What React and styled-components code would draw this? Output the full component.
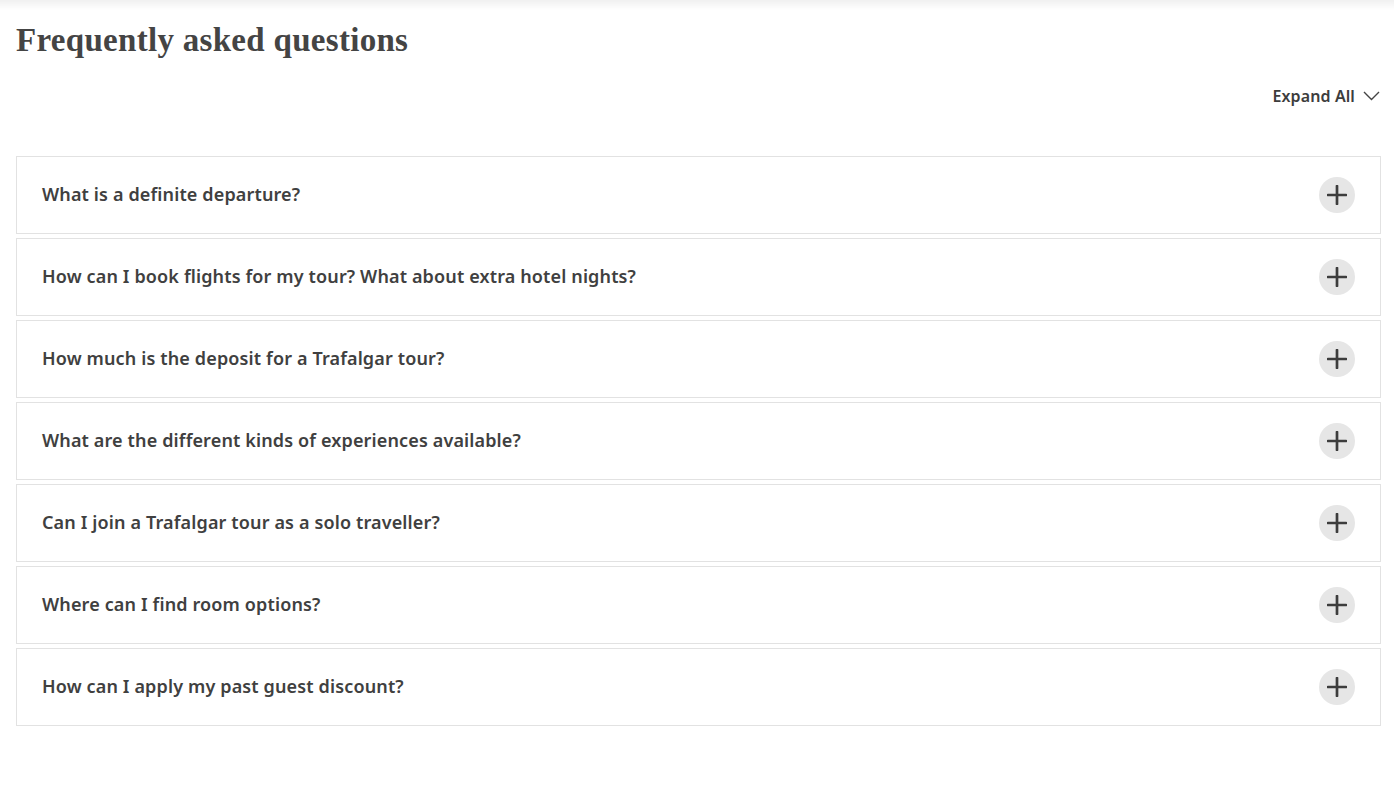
import React, { useState } from 'react';
import styled, { createGlobalStyle } from 'styled-components';

const questions = [
  'What is a definite departure?',
  'How can I book flights for my tour? What about extra hotel nights?',
  'How much is the deposit for a Trafalgar tour?',
  'What are the different kinds of experiences available?',
  'Can I join a Trafalgar tour as a solo traveller?',
  'Where can I find room options?',
  'How can I apply my past guest discount?',
];

function PlusIcon() {
  return (
    <svg width="20" height="20" viewBox="0 0 20 20">
      <path d="M10 1v18M1 10h18" stroke="#3d3d3d" strokeWidth="2.7" strokeLinecap="round" />
    </svg>
  );
}

function ChevronDown() {
  return (
    <svg width="17" height="10" viewBox="0 0 17 10" fill="none">
      <path d="M1 1l7.5 7.5L16 1" stroke="#444" strokeWidth="1.4" />
    </svg>
  );
}

export default function App() {
  const [open, setOpen] = useState({});

  const toggle = (i) => {
    setOpen({ ...open, [i]: !open[i] });
  };

  return (
    <>
      <GlobalStyle />
      <Page>
        <TopShade />
        <Title>Frequently asked questions</Title>
        <ToolRow>
          <ExpandButton>
            Expand All
            <ChevronDown />
          </ExpandButton>
        </ToolRow>
        <List>
          {questions.map((q, i) => (
            <Item key={q}>
              <Question onClick={() => toggle(i)}>
                <QuestionText>{q}</QuestionText>
                <Circle>
                  <PlusIcon />
                </Circle>
              </Question>
            </Item>
          ))}
        </List>
      </Page>
    </>
  );
}

const GlobalStyle = createGlobalStyle`
  body {
    margin:0;
    background:#ffffff;
    font-family:"Noto Sans", "Open Sans", sans-serif;
  }
`;

const Page = styled.div`
  position:relative;
  padding:0 13px 0 16px;
  min-height:799px;
`;

const TopShade = styled.div`
  position:absolute;
  top:0;
  left:0;
  right:0;
  height:10px;
  background:linear-gradient(to bottom, rgba(0,0,0,0.06), rgba(0,0,0,0));
`;

const Title = styled.h2`
  margin:0;
  padding-top:20px;
  font-family:"Liberation Serif", "DejaVu Serif", serif;
  font-weight:700;
  font-size:33px;
  line-height:40px;
  letter-spacing:0.3px;
  color:#444444;
`;

const ToolRow = styled.div`
  display:flex;
  justify-content:flex-end;
  padding-top:22px;
  height:28px;
  margin-bottom:46px;
`;

const ExpandButton = styled.button`
  display:flex;
  align-items:center;
  gap:8px;
  border:none;
  background:none;
  padding:0 1px 0 0;
  font-family:"Noto Sans", sans-serif;
  font-weight:600;
  font-size:16px;
  letter-spacing:0.1px;
  color:#3d3d3d;
  cursor:pointer;
`;

const List = styled.div`
  display:flex;
  flex-direction:column;
  gap:4px;
`;

const Item = styled.div`
  border:1px solid #e2e2e2;
`;

const Question = styled.div`
  display:flex;
  align-items:center;
  justify-content:space-between;
  height:76px;
  padding:0 25px;
  cursor:pointer;
`;

const QuestionText = styled.span`
  margin-bottom:2px;
  font-family:"Noto Sans", sans-serif;
  font-weight:600;
  font-size:18px;
  letter-spacing:0.14px;
  color:#404040;
`;

const Circle = styled.div`
  width:36px;
  height:36px;
  border-radius:50%;
  background:#e6e6e6;
  display:flex;
  align-items:center;
  justify-content:center;
`;
